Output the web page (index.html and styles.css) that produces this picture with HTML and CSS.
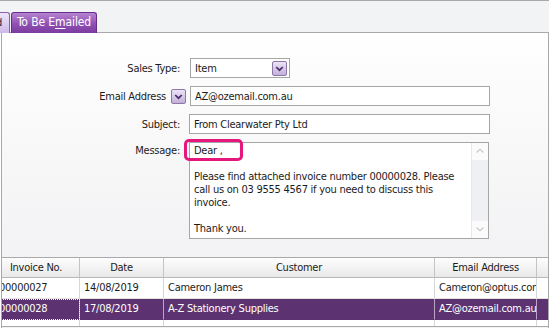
FILE: index.html
```html
<!DOCTYPE html>
<html>

<head>
	<meta charset='utf-8'>
	<title>To Be Emailed</title>
	<meta name='viewport' content='width=device-width, initial-scale=1'>
	<link rel="stylesheet" href="styles.css">
</head>

<body>
	<div class="window">
		<div class="tabs">
			<div class="tab tab-prev"><span>To Be Printed</span></div>
			<div class="tab tab-active">To Be E<u>m</u>ailed</div>
		</div>

		<div class="panel">
			<div class="form">
				<div class="label">Sales Type:</div>
				<div class="select">
					<span>Item</span>
					<span class="drop">
						<svg viewBox="0 0 15 15" width="15" height="15"><path d="M4.2 6 L7.5 9.2 L10.8 6" /></svg>
					</span>
				</div>

				<div class="label label-email">
					<span>Email Address</span>
					<span class="drop">
						<svg viewBox="0 0 15 15" width="15" height="15"><path d="M4.2 6 L7.5 9.2 L10.8 6" /></svg>
					</span>
				</div>
				<div class="input input-email">AZ@ozemail.com.au</div>

				<div class="label">Subject:</div>
				<div class="input">From Clearwater Pty Ltd</div>

				<div class="label label-top">Message:</div>
				<div class="message">
					<div class="message-text">Dear ,

Please find attached invoice number 00000028. Please call us on 03 9555 4567 if you need to discuss this invoice.

Thank you.</div>
					<div class="scrollbar">
						<div class="arrow">
							<svg viewBox="0 0 16 16" width="16" height="16"><path d="M4.5 9.5 L8 6.2 L11.5 9.5" /></svg>
						</div>
						<div class="track"></div>
						<div class="arrow">
							<svg viewBox="0 0 16 16" width="16" height="16"><path d="M4.5 6.5 L8 9.8 L11.5 6.5" /></svg>
						</div>
					</div>
					<div class="highlight"></div>
				</div>
			</div>

			<div class="grid">
				<div class="grid-inner">
					<div class="row head">
						<div class="cell">Invoice No.</div>
						<div class="cell">Date</div>
						<div class="cell">Customer</div>
						<div class="cell">Email Address</div>
						<div class="cell"></div>
					</div>
					<div class="row">
						<div class="cell">00000027</div>
						<div class="cell">14/08/2019</div>
						<div class="cell">Cameron James</div>
						<div class="cell">Cameron@optus.com.au</div>
						<div class="cell"></div>
					</div>
					<div class="row selected">
						<div class="cell focus">00000028</div>
						<div class="cell">17/08/2019</div>
						<div class="cell">A-Z Stationery Supplies</div>
						<div class="cell">AZ@ozemail.com.au</div>
						<div class="cell"></div>
					</div>
					<div class="row">
						<div class="cell"></div>
						<div class="cell"></div>
						<div class="cell"></div>
						<div class="cell"></div>
						<div class="cell"></div>
					</div>
				</div>
			</div>
		</div>
	</div>
</body>

</html>
```

FILE: styles.css
```css
* {
	box-sizing: border-box;
}

body {
	margin: 0;
	background: #fff;
	color: #1c1c1c;
	font-family: "DejaVu Sans Condensed", "Liberation Sans", sans-serif;
	font-size: 11px;
	letter-spacing: -0.25px;
}

.window {
	display: flex;
	flex-direction: column;
	width: 549px;
	height: 328px;
}

/* tab strip */

.tabs {
	display: flex;
	align-items: flex-end;
	gap: 1px;
	height: 33px;
	border-top: 1px solid #a9a9a9;
	border-bottom: 1px solid #a9a9a9;
	background: #f2f3f5;
}

.tab {
	height: 21px;
	margin-bottom: -1px;
	line-height: 19px;
	white-space: nowrap;
}

.tab-prev {
	display: flex;
	justify-content: flex-end;
	width: 10px;
	overflow: hidden;
	border: 1px solid #8a62a8;
	border-left: none;
	border-bottom: none;
	border-radius: 0 3px 0 0;
	background: linear-gradient(#eee6fb, #cdb9ea);
	color: #2a1c40;
}

.tab-prev span {
	padding-right: 7px;
}

.tab-active {
	width: 86px;
	border: 1px solid #6a2c8a;
	border-bottom: none;
	border-radius: 3px 3px 0 0;
	background: linear-gradient(#b684d2, #9050b3 55%, #7c3b9e);
	color: #fff;
	text-align: center;
	font-size: 12px;
	letter-spacing: -0.1px;
}

.tab-active u {
	text-underline-offset: 2px;
}

/* panel */

.panel {
	flex: 1;
	display: flex;
	flex-direction: column;
	margin-left: 1px;
	border-left: 1px solid #a9a9a9;
	border-right: 1px solid #a9a9a9;
	background: linear-gradient(#fff, #fbfbfb 20%, #f3f3f5 70%);
}

.form {
	display: grid;
	grid-template-columns: 184px 301px;
	grid-template-rows: 20px 20px 20px 97px;
	column-gap: 3px;
	row-gap: 8px;
	padding-top: 25px;
}

.label {
	display: flex;
	align-items: center;
	justify-content: flex-end;
	padding-right: 6px;
	white-space: nowrap;
}

.label-email {
	gap: 5px;
	padding-right: 0;
}

.label-top {
	align-items: flex-start;
	padding-top: 2px;
}

.drop {
	display: block;
	width: 15px;
	height: 15px;
	border: 1px solid #8b78a6;
	border-radius: 2px;
	background: linear-gradient(#ece4f5, #c3b0da);
}

.drop svg {
	display: block;
	margin: -1px;
	fill: none;
	stroke: #4b2a6e;
	stroke-width: 1.7;
}

.select {
	display: flex;
	align-items: center;
	justify-content: space-between;
	width: 100px;
	margin-left: 1px;
	padding: 0 2px 0 4px;
	border: 1px solid #a6a6a6;
	background: #fff;
}

.input {
	display: flex;
	align-items: center;
	padding-left: 4px;
	border: 1px solid #a6a6a6;
	background: #fff;
	white-space: nowrap;
}

.input-email {
	margin-left: 1px;
}

.message {
	position: relative;
	display: flex;
	width: 300px;
	border: 1px solid #a6a6a6;
	background: #fff;
}

.message-text {
	flex: 1;
	padding: 1px 4px;
	line-height: 13px;
	white-space: pre-line;
}

.scrollbar {
	display: flex;
	flex-direction: column;
	width: 17px;
	border-left: 1px solid #e8e8e8;
}

.arrow {
	height: 17px;
	background: #fbfbfb;
}

.arrow svg {
	display: block;
	fill: none;
	stroke: #c9c9cd;
	stroke-width: 1.2;
}

.track {
	flex: 1;
	background: #eff0f3;
}

/* annotation box round the greeting */
.highlight {
	position: absolute;
	left: -6px;
	top: -4px;
	width: 59px;
	height: 22px;
	border: 3px solid #e5177d;
	border-radius: 5px;
}

/* invoice grid */

.grid {
	height: 70px;
	margin-top: auto;
	margin-bottom: 1px;
	overflow: hidden;
	border-top: 1px solid #a9a9a9;
	border-bottom: 1px solid #a9a9a9;
	background: #fff;
}

.grid-inner {
	margin-left: -9px;
}

.row {
	display: grid;
	grid-template-columns: 87px 84px 271px 102px 20px;
	height: 21px;
}

.cell {
	overflow: hidden;
	padding-left: 4px;
	border-right: 1px solid #d6d6d6;
	border-bottom: 1px solid #e2e2e2;
	line-height: 20px;
	white-space: nowrap;
}

.row .cell:first-child {
	padding-left: 6px;
}

.head {
	height: 20px;
}

.head .cell,
.head .cell:first-child {
	padding-left: 0;
	border-right-color: #c4c4c4;
	border-bottom-color: #b8b8b8;
	background: linear-gradient(#fdfdfd, #e9e9e9);
	line-height: 19px;
	text-align: center;
}

.selected .cell {
	border-right-color: #b9a6c4;
	border-bottom-color: #5c3370;
	background: #5c3370;
	color: #fff;
}

.selected .focus {
	outline: 1px dotted #fff;
	outline-offset: -1px;
}
```
